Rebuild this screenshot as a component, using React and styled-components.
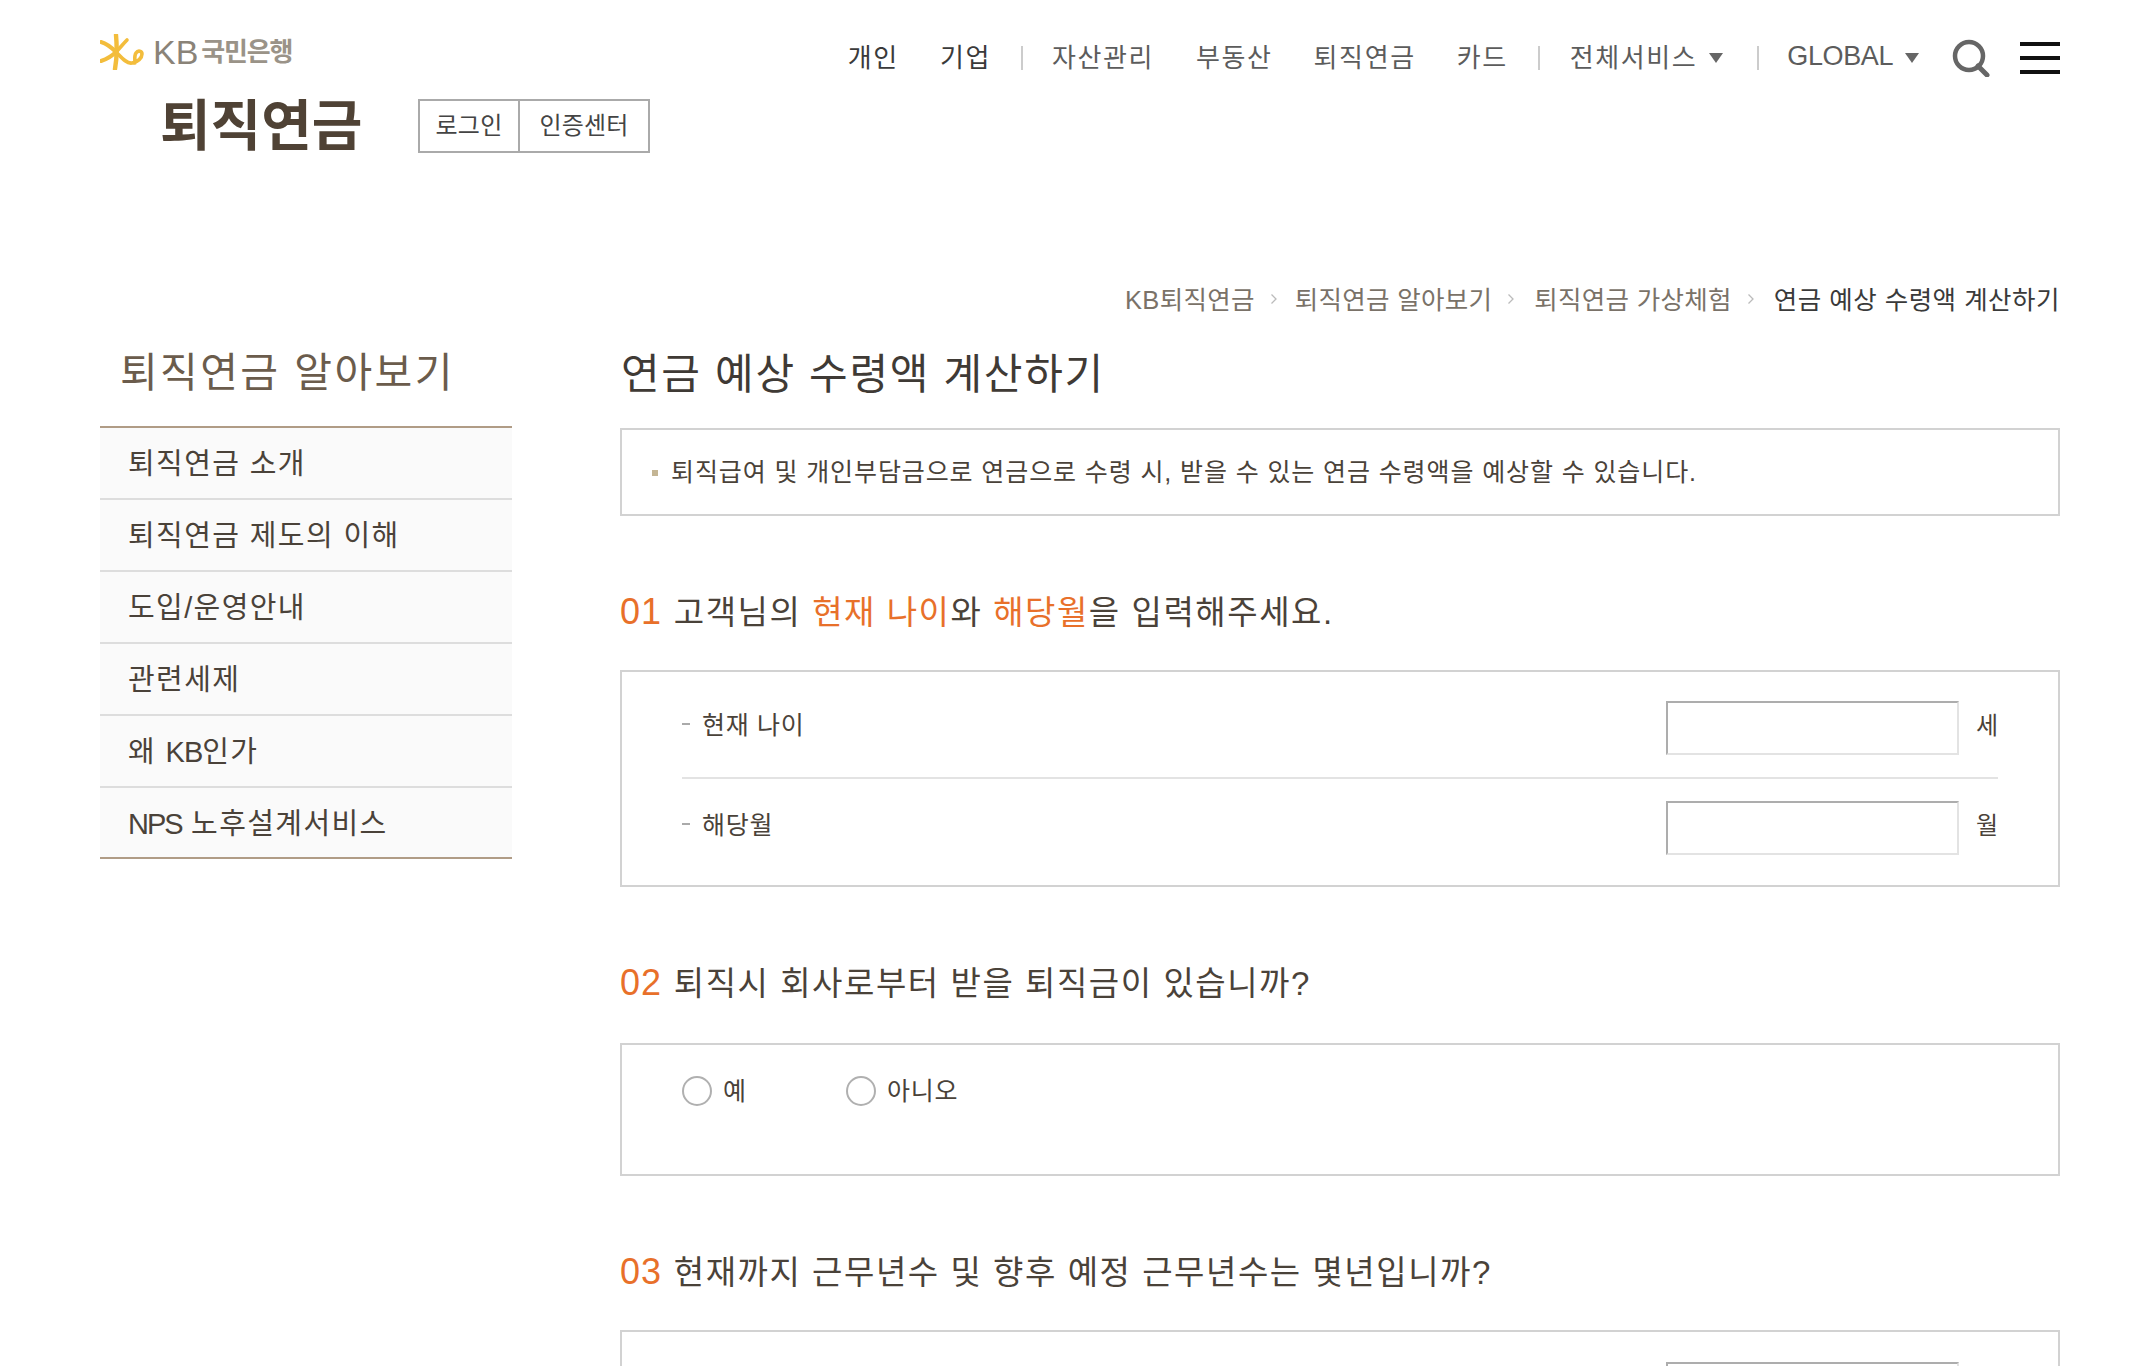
import React from "react";
import styled, { createGlobalStyle } from "styled-components";

const Global = createGlobalStyle`
  html, body { margin: 0; padding: 0; background: #fff; }
  body { font-family: "Liberation Sans", "Noto Sans CJK KR", sans-serif; color: #4a4239; }
  #root { height: 1366px; overflow: hidden; }
  * { box-sizing: border-box; }
`;

const Page = styled.div`
  width: 2156px;
  padding: 0 96px 0 100px;
`;
const Header = styled.header`
  display: flex;
  justify-content: space-between;
  align-items: flex-start;
  height: 270px;
`;
const Brand = styled.div`
  display: flex;
  flex-direction: column;
  padding-top: 35px;
`;
const LogoRow = styled.div`
  display: flex;
  align-items: center;
  gap: 9px;
  height: 34px;
`;
const LogoKB = styled.span`
  font-size: 34px;
  line-height: 34px;
  color: #8a8378;
  margin-right: -6px;
`;
const LogoText = styled.span`
  font-size: 26px;
  line-height: 34px;
  font-weight: 700;
  color: #9a9388;
  letter-spacing: -1.2px;
`;
const TitleRow = styled.div`
  display: flex;
  align-items: center;
  margin-top: 30px;
  padding-left: 60px;
`;
const SiteTitle = styled.div`
  width: 258px;
  font-size: 55px;
  line-height: 54px;
  font-weight: 700;
  color: #4f4235;
`;
const AuthBox = styled.div`
  display: flex;
  height: 54px;
  border: 2px solid #aaa;
`;
const AuthLink = styled.a`
  display: flex;
  align-items: center;
  justify-content: center;
  width: ${(p) => p.$w}px;
  font-size: 24px;
  letter-spacing: 0.2px;
  padding-bottom: 5px;
  color: #444;
  & + & { border-left: 2px solid #aaa; }
`;
const Nav = styled.nav`
  display: flex;
  align-items: center;
  height: 115px;
`;
const NavItem = styled.a`
  font-size: 26px;
  line-height: 36px;
  letter-spacing: 1.6px;
  color: ${(p) => (p.$dark ? "#3a3a3a" : "#5c5c5c")};
  margin-left: ${(p) => p.$ml}px;
  white-space: nowrap;
`;
const NavLatin = styled(NavItem)`
  font-size: 27px;
  letter-spacing: -0.4px;
  margin-top: -3px;
`;
const NavSep = styled.span`
  width: 2px;
  height: 24px;
  background: #ccc;
  margin-left: ${(p) => p.$ml}px;
`;
const Caret = styled.span`
  width: 0;
  height: 0;
  margin-left: 12px;
  border-left: 7px solid transparent;
  border-right: 7px solid transparent;
  border-top: 10px solid #666;
`;
const SearchIcon = styled.svg`
  width: 38px;
  height: 38px;
  margin-left: 33px;
`;
const Burger = styled.div`
  display: flex;
  flex-direction: column;
  gap: 10px;
  width: 40px;
  margin-left: 30px;
  span { height: 4px; background: #111; display: block; }
`;
const Crumbs = styled.div`
  display: flex;
  justify-content: flex-end;
  align-items: center;
  height: 56px;
  padding-bottom: 2px;
  font-size: 25.5px;
  color: #7a7268;
  letter-spacing: 0.3px;
`;
const CrumbSep = styled.svg`
  width: 8px;
  height: 12px;
  margin: 4px ${(p) => p.$r}px 0 15px;
`;
const CrumbCurrent = styled.span`
  color: #3a3a3a;
  letter-spacing: 0.5px;
`;
const Main = styled.div`
  display: flex;
  align-items: flex-start;
`;
const Side = styled.aside`
  width: 412px;
  margin-right: 108px;
`;
const SideTitle = styled.h2`
  margin: 0;
  padding-left: 20px;
  height: 100px;
  font-size: 41px;
  line-height: 94px;
  font-weight: 400;
  color: #6b5c4c;
  letter-spacing: 2.4px;
`;
const Menu = styled.ul`
  list-style: none;
  margin: 0;
  padding: 0;
  border-top: 2px solid #b09c86;
  border-bottom: 2px solid #b09c86;
`;
const MenuItem = styled.li`
  height: 72px;
  padding-left: 28px;
  background: #fafafa;
  font-size: 29px;
  line-height: 72px;
  color: #4a4239;
  letter-spacing: 1.4px;
  &:not(:last-child) { border-bottom: 2px solid #ddd; }
  &:last-child { height: 69px; }
`;
const MenuLatin = styled.span`
  letter-spacing: ${(p) => p.$ls}px;
`;
const Content = styled.section`
  flex: 1;
`;
const PageTitle = styled.h1`
  margin: 0;
  height: 102px;
  padding-left: 1px;
  font-size: 42px;
  line-height: 98px;
  font-weight: 400;
  color: #3f3a35;
  letter-spacing: 1.7px;
`;
const Info = styled.div`
  display: flex;
  align-items: center;
  height: 88px;
  border: 2px solid #d2d2d2;
  padding: 0 0 4px 30px;
  font-size: 25px;
  letter-spacing: 0.9px;
  color: #4a4239;
`;
const Square = styled.span`
  width: 6px;
  height: 6px;
  background: #c4b594;
  margin-right: 13px;
  margin-top: 6px;
`;
const Heading = styled.h3`
  margin: ${(p) => p.$mt}px 0 0;
  height: 40px;
  font-size: 33px;
  line-height: 40px;
  font-weight: 400;
  color: #4a4239;
  letter-spacing: 1.55px;
  white-space: nowrap;
`;
const Accent = styled.span`
  color: #e8702a;
`;
const Num = styled(Accent)`
  font-size: 36px;
  margin-right: 1px;
  letter-spacing: 1px;
`;
const Card = styled.div`
  margin-top: ${(p) => p.$mt}px;
  height: ${(p) => p.$h}px;
  border: 2px solid #d2d2d2;
  padding: ${(p) => p.$pt}px 60px 0;
`;
const Row = styled.div`
  display: flex;
  align-items: center;
  height: ${(p) => p.$h}px;
  padding-top: ${(p) => p.$pad}px;
  ${(p) => p.$line && "border-bottom: 2px solid #e3e3e3;"}
`;
const Dash = styled.span`
  width: 8px;
  height: 2px;
  background: #aaa;
  margin: 0 12px 9px 0;
`;
const Label = styled.span`
  flex: 1;
  font-size: 25px;
  letter-spacing: 0.7px;
  margin-bottom: 10px;
`;
const Field = styled.input`
  width: 293px;
  height: 54px;
  padding: 0;
  background: #fff;
  border-style: solid;
  border-width: 2px;
  border-color: #adadad #e3e3e3 #e3e3e3 #adadad;
  outline: none;
`;
const Unit = styled.span`
  width: 39px;
  text-align: right;
  font-size: 24px;
  margin-bottom: 10px;
`;
const Radios = styled.div`
  display: flex;
  align-items: center;
`;
const RadioWrap = styled.label`
  display: flex;
  align-items: center;
  width: ${(p) => p.$w}px;
  font-size: 25px;
  letter-spacing: 0.7px;
`;
const RadioDot = styled.span`
  width: 30px;
  height: 30px;
  margin-right: 11px;
  border: 2px solid #b0b0b0;
  border-radius: 50%;
  background: #fff;
`;
const RadioText = styled.span`
  margin-top: -3px;
`;

const CrumbArrow = ({ r = 19 }) => (
  <CrumbSep $r={r} viewBox="0 0 8 12"><path d="M1.5 1.5 6 6l-4.5 4.5" fill="none" stroke="#bbb" strokeWidth="1.3" /></CrumbSep>
);

export default function App() {
  return (
    <Page>
      <Global />
      <Header>
        <Brand>
          <LogoRow>
            <svg width="44" height="36" viewBox="0 0 44 36">
              <g fill="none" stroke="#f3bd3c" strokeLinecap="round">
                <path d="M16 1c1 11 1 23 -1 34" strokeWidth="4.4" />
                <path d="M1 8c7 2 11 6 15 10" strokeWidth="4" />
                <path d="M1 27c6-2 11-5 15-9" strokeWidth="4" />
                <path d="M27 6c-4 4-7 8-11 12" strokeWidth="3.6" />
                <path d="M16 18c5 5 10 12 16 11c6-1 10-5 10-9c0-3-4-4-6-1c-2 3-1 7 -1 10" strokeWidth="3.6" />
              </g>
            </svg>
            <LogoKB>KB</LogoKB>
            <LogoText>국민은행</LogoText>
          </LogoRow>
          <TitleRow>
            <SiteTitle>퇴직연금</SiteTitle>
            <AuthBox>
              <AuthLink $w={98}>로그인</AuthLink>
              <AuthLink $w={130}>인증센터</AuthLink>
            </AuthBox>
          </TitleRow>
        </Brand>
        <Nav>
          <NavItem $dark $ml={0}>개인</NavItem>
          <NavItem $dark $ml={41}>기업</NavItem>
          <NavSep $ml={30} />
          <NavItem $ml={29}>자산관리</NavItem>
          <NavItem $ml={42}>부동산</NavItem>
          <NavItem $ml={41}>퇴직연금</NavItem>
          <NavItem $ml={41}>카드</NavItem>
          <NavSep $ml={30} />
          <NavItem $ml={30}>전체서비스</NavItem>
          <Caret />
          <NavSep $ml={34} />
          <NavLatin $ml={28}>GLOBAL</NavLatin>
          <Caret />
          <SearchIcon viewBox="0 0 38 38">
            <circle cx="17" cy="17" r="14" fill="none" stroke="#666" strokeWidth="4.5" />
            <path d="M26 27l9 9" stroke="#666" strokeWidth="5" strokeLinecap="round" />
          </SearchIcon>
          <Burger><span /><span /><span /></Burger>
        </Nav>
      </Header>
      <Crumbs>
        <span>KB퇴직연금</span><CrumbArrow r={17} />
        <span>퇴직연금 알아보기</span><CrumbArrow />
        <span>퇴직연금 가상체험</span><CrumbArrow />
        <CrumbCurrent>연금 예상 수령액 계산하기</CrumbCurrent>
      </Crumbs>
      <Main>
        <Side>
          <SideTitle>퇴직연금 알아보기</SideTitle>
          <Menu>
            <MenuItem>퇴직연금 소개</MenuItem>
            <MenuItem>퇴직연금 제도의 이해</MenuItem>
            <MenuItem>도입/운영안내</MenuItem>
            <MenuItem>관련세제</MenuItem>
            <MenuItem>왜 <MenuLatin $ls={-1}>KB</MenuLatin>인가</MenuItem>
            <MenuItem><MenuLatin $ls={-2}>NPS</MenuLatin> 노후설계서비스</MenuItem>
          </Menu>
        </Side>
        <Content>
          <PageTitle>연금 예상 수령액 계산하기</PageTitle>
          <Info>
            <Square />
            퇴직급여 및 개인부담금으로 연금으로 수령 시, 받을 수 있는 연금 수령액을 예상할 수 있습니다.
          </Info>
          <Heading $mt={76}><Num>01</Num> 고객님의 <Accent>현재 나이</Accent>와 <Accent>해당월</Accent>을 입력해주세요.</Heading>
          <Card $mt={38} $h={217} $pt={0}>
            <Row $h={107} $pad={7} $line>
              <Dash /><Label>현재 나이</Label><Field /><Unit>세</Unit>
            </Row>
            <Row $h={98} $pad={0}>
              <Dash /><Label>해당월</Label><Field /><Unit>월</Unit>
            </Row>
          </Card>
          <Heading $mt={76}><Num>02</Num> 퇴직시 회사로부터 받을 퇴직금이 있습니까?</Heading>
          <Card $mt={40} $h={133} $pt={29}>
            <Radios>
              <RadioWrap $w={164}><RadioDot /><RadioText>예</RadioText></RadioWrap>
              <RadioWrap $w={200}><RadioDot /><RadioText>아니오</RadioText></RadioWrap>
            </Radios>
          </Card>
          <Heading $mt={76}><Num>03</Num> 현재까지 근무년수 및 향후 예정 근무년수는 몇년입니까?</Heading>
          <Card $mt={38} $h={216} $pt={0}>
            <Row $h={107} $pad={7}>
              <Dash /><Label></Label><Field /><Unit></Unit>
            </Row>
          </Card>
        </Content>
      </Main>
    </Page>
  );
}
